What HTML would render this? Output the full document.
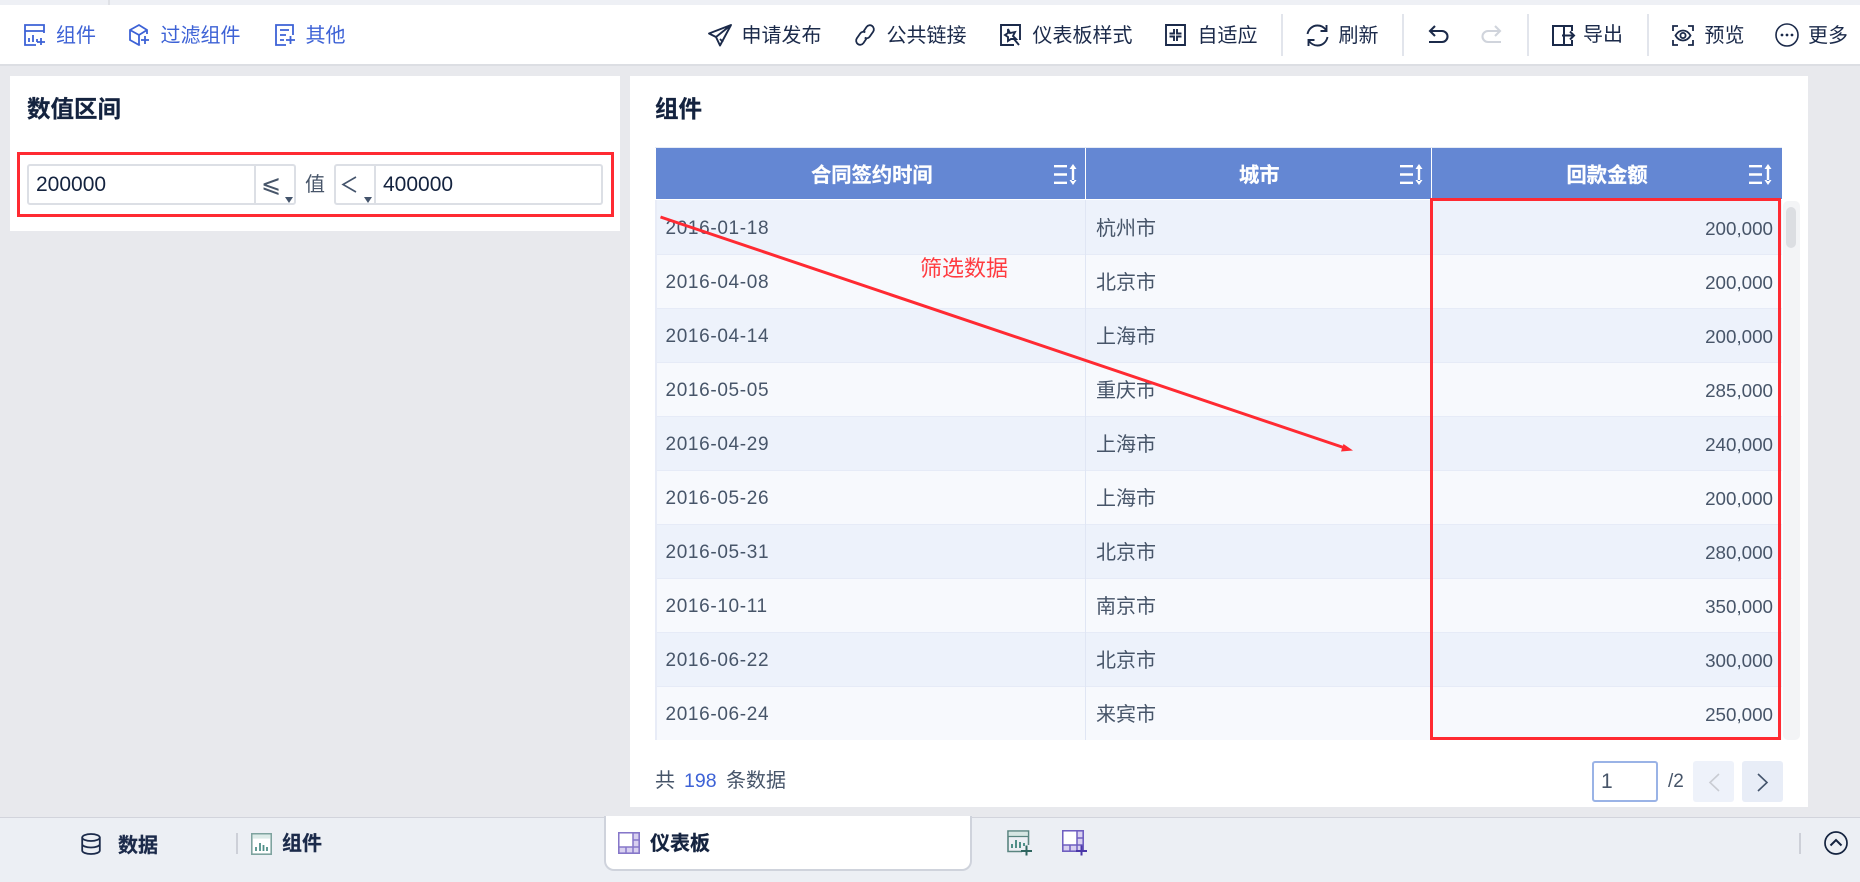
<!DOCTYPE html>
<html lang="zh"><head><meta charset="utf-8"><title>仪表板</title>
<style>
html,body{margin:0;padding:0}
body{width:1860px;height:882px;position:relative;overflow:hidden;background:#e8e9ed;font-family:"Liberation Sans","Noto Sans CJK SC",sans-serif;color:#1b2a4a}
.a{position:absolute;box-sizing:border-box}
.t{position:absolute;white-space:nowrap;line-height:24px;height:24px;font-size:20px;margin-top:1px}
.b{font-weight:700;-webkit-text-stroke:.25px currentColor}
.bl{color:#3d62d6}
.g{color:#475569}
svg{position:absolute;overflow:visible}
.v{position:absolute;width:2px;background:#e2e5ec}
.r{position:absolute;left:655px;width:1127px;border-bottom:1px solid #e6ebf7;box-sizing:border-box}
.c1,.c2,.c3{position:absolute;line-height:24px;white-space:nowrap;color:#475569;margin-top:1px}
.c1{left:10.5px;font-size:19px;letter-spacing:.65px}
.c2{left:441px;font-size:20px}
.c3{right:9px;font-size:18.8px}
.th{position:absolute;top:148px;height:51px;background:#6487d3}
.tt{position:absolute;top:164px;line-height:24px;font-size:20.300px;font-weight:700;color:#fff;white-space:nowrap;-webkit-text-stroke:.25px #fff}
</style></head><body>

<!-- top strip -->
<div class="a" style="left:0;top:0;width:1860px;height:5px;background:#eef0f5"></div>
<div class="a" style="left:108px;top:0;width:2px;height:5px;background:#dfe1e6"></div>
<!-- toolbar -->
<div class="a" style="left:0;top:5px;width:1860px;height:59px;background:#fff"></div>
<div class="a" style="left:0;top:64px;width:1860px;height:2px;background:#dcdee3"></div>

<svg style="left:24px;top:24px" width="22" height="22" viewBox="0 0 22 22" fill="none" stroke="#3d62d6" stroke-width="1.8"><path d="M20 9V1H1v20h11M1 7h19M5 18v-4M9 18v-7M13 18v-3M13 18h8M17 14v7"/></svg>
<span class="t bl" style="left:56px;top:23px">组件</span>
<svg style="left:129px;top:24px" width="21" height="22" viewBox="0 0 21 22" fill="none" stroke="#3d62d6" stroke-width="1.8"><path d="M18 10V6L10 1 1 6v10l9 5 1-.5M1 6l9 5 8-5M10 11v10M12 16h8M16 12v8"/></svg>
<span class="t bl" style="left:160.500px;top:23px">过滤组件</span>
<svg style="left:275px;top:24px" width="21" height="22" viewBox="0 0 21 22" fill="none" stroke="#3d62d6" stroke-width="1.8"><path d="M18 11V1H1v20h10M5 6h9M5 11h6M5 16h4M11 16h9M15.500 12v8"/></svg>
<span class="t bl" style="left:305.500px;top:23px">其他</span>

<svg style="left:708px;top:24px" width="24" height="23" viewBox="0 0 24 23" fill="none" stroke="#1b2a4a" stroke-width="1.9" stroke-linejoin="round"><path d="M23 1 1 9.500l7 3.500 4 8.500L23 1zM8 13 23 1M12 15l3 3"/></svg>
<span class="t" style="left:741.500px;top:23px">申请发布</span>
<svg style="left:854px;top:24px" width="22" height="22" viewBox="0 0 22 22" fill="none" stroke="#1b2a4a" stroke-width="1.8"><path d="M9.500 7.500l3-4.500c1.500-2 4-2.300 5.700-1s2.200 3.800 1 5.600l-3.500 5c-1.200 1.700-3.300 2-5 1M12.500 14.500l-3 4.500c-1.500 2-4 2.300-5.700 1s-2.200-3.800-1-5.600l3.500-5c1.200-1.700 3.300-2 5-1"/></svg>
<span class="t" style="left:886.500px;top:23px">公共链接</span>
<svg style="left:1000px;top:24px" width="21" height="22" viewBox="0 0 21 22" fill="none" stroke="#1b2a4a" stroke-width="1.9"><path d="M14 21H1V1h19v15M8 5l2 4 5-1-2 4 3 3-5 0-3 2 0-4-3-2 3-2zM14 15l5 6"/></svg>
<span class="t" style="left:1032.500px;top:23px">仪表板样式</span>
<svg style="left:1165px;top:24px" width="21" height="22" viewBox="0 0 21 22" fill="none" stroke="#1b2a4a" stroke-width="1.9"><path d="M1 1h19v20H1zM4.500 9.500h4.500V5M16.500 9.500H12V5M4.500 12.500h4.500V17M16.500 12.500H12V17"/></svg>
<span class="t" style="left:1197.500px;top:23px">自适应</span>

<div class="v" style="left:1281px;top:14px;height:42px"></div>
<svg style="left:1306px;top:24px" width="23" height="23" viewBox="0 0 23 23" fill="none" stroke="#1b2a4a" stroke-width="1.9"><path d="M1.500 10C2.500 5 6.500 1.500 11.500 1.500c3.500 0 6.300 1.500 8.500 4.500M21.500 13c-1 5-5 8.500-10 8.500-3.500 0-6.300-1.500-8.500-4.500M20.500 1v6h-6M2.500 22v-6h6"/></svg>
<span class="t" style="left:1338.500px;top:23px">刷新</span>
<div class="v" style="left:1402px;top:14px;height:42px"></div>
<svg style="left:1428px;top:24px" width="21" height="21" viewBox="0 0 21 21" fill="none" stroke="#1b2a4a" stroke-width="2.100"><path d="M7 2 2 7l5 5M2 7h12a5.500 5.500 0 0 1 0 11H1"/></svg>
<svg style="left:1481px;top:24px" width="21" height="21" viewBox="0 0 21 21" fill="none" stroke="#d0d4dc" stroke-width="2.100"><path d="M14 2l5 5-5 5M19 7H7a5.500 5.500 0 0 0 0 11h13"/></svg>
<div class="v" style="left:1527px;top:14px;height:42px"></div>
<svg style="left:1552px;top:25px" width="23" height="21" viewBox="0 0 23 21" fill="none" stroke="#1b2a4a" stroke-width="2"><path d="M1 1h11v19H1zM12 1h8v5M12 20h8v-5M10 10.500h12M18 6.500l4 4-4 4"/></svg>
<span class="t" style="left:1583px;top:22px">导出</span>
<div class="v" style="left:1647px;top:14px;height:42px"></div>
<svg style="left:1672px;top:25px" width="22" height="21" viewBox="0 0 22 21" fill="none" stroke="#1b2a4a" stroke-width="1.8"><path d="M1 6V1h5M16 1h5v5M1 15v5h5M16 20h5v-5M3.500 10.500C5.500 7 8 5.500 11 5.500s5.500 1.500 7.500 5c-2 3.500-4.500 5-7.500 5s-5.500-1.500-7.500-5z"/><circle cx="11" cy="10.500" r="2.600"/></svg>
<span class="t" style="left:1704.500px;top:23px">预览</span>
<svg style="left:1775px;top:23px" width="24" height="24" viewBox="0 0 24 24" fill="none" stroke="#1b2a4a" stroke-width="1.6"><circle cx="12" cy="12" r="11"/><circle cx="7" cy="12" r=".6" fill="#1b2a4a"/><circle cx="12" cy="12" r=".6" fill="#1b2a4a"/><circle cx="17" cy="12" r=".6" fill="#1b2a4a"/></svg>
<span class="t" style="left:1808px;top:23px">更多</span>

<!-- left panel -->
<div class="a" style="left:10px;top:76px;width:610px;height:155px;background:#fff"></div>
<span class="t b" style="left:27px;top:96px;font-size:23.500px;line-height:24px;color:#14233f">数值区间</span>
<div class="a" style="left:27px;top:164px;width:269px;height:41px;border:2px solid #dcdfe5;border-radius:3px;background:#fff"></div>
<div class="a" style="left:254px;top:165px;width:2px;height:39px;background:#dcdfe5"></div>
<span class="t" style="left:36px;top:172px;font-size:21px;color:#14233f">200000</span>
<span class="t g" style="left:261px;top:171px;font-size:24px;font-family:'DejaVu Sans',sans-serif">⩽</span>
<div class="a" style="left:285px;top:197px;width:0;height:0;border-left:4px solid transparent;border-right:4px solid transparent;border-top:6px solid #44546c"></div>
<span class="t g" style="left:305px;top:172px">值</span>
<div class="a" style="left:334px;top:164px;width:269px;height:41px;border:2px solid #dcdfe5;border-radius:3px;background:#fff"></div>
<div class="a" style="left:374px;top:165px;width:2px;height:39px;background:#dcdfe5"></div>
<svg style="left:342px;top:176px" width="15" height="17" viewBox="0 0 15 17" fill="none" stroke="#44546c" stroke-width="1.6"><path d="M14 1 1 8.500 14 16"/></svg>
<div class="a" style="left:364px;top:197px;width:0;height:0;border-left:4px solid transparent;border-right:4px solid transparent;border-top:6px solid #44546c"></div>
<span class="t" style="left:383px;top:172px;font-size:21px;color:#14233f">400000</span>
<div class="a" style="left:17px;top:152px;width:597px;height:65px;border:3px solid #ff2a32"></div>

<!-- right panel -->
<div class="a" style="left:630px;top:76px;width:1178px;height:731px;background:#fff"></div>
<span class="t b" style="left:655px;top:96px;font-size:23.500px;color:#14233f">组件</span>

<div class="th" style="left:656px;width:429px"></div>
<div class="th" style="left:1086px;width:345px"></div>
<div class="th" style="left:1432px;width:350px"></div>
<div class="a" style="left:655px;top:147px;width:1127px;height:1px;background:#e6ebf5"></div>
<span class="tt" style="left:811px">合同签约时间</span>
<span class="tt" style="left:1239px">城市</span>
<span class="tt" style="left:1566.500px">回款金额</span>
<svg style="left:1054px;top:164px" width="24" height="21" viewBox="0 0 24 21" fill="#fff"><path d="M0 1h13v2.400H0zM0 9.300h13v2.400H0zM0 17.600h13v2.400H0zM17.800 4h2.400v13h-2.400zM15.500 5l3.500-5 3.500 5zM15.500 16l3.500 5 3.500-5z"/></svg>
<svg style="left:1400px;top:164px" width="24" height="21" viewBox="0 0 24 21" fill="#fff"><path d="M0 1h13v2.400H0zM0 9.300h13v2.400H0zM0 17.600h13v2.400H0zM17.800 4h2.400v13h-2.400zM15.500 5l3.500-5 3.500 5zM15.500 16l3.500 5 3.500-5z"/></svg>
<svg style="left:1749px;top:164px" width="24" height="21" viewBox="0 0 24 21" fill="#fff"><path d="M0 1h13v2.400H0zM0 9.300h13v2.400H0zM0 17.600h13v2.400H0zM17.800 4h2.400v13h-2.400zM15.500 5l3.500-5 3.500 5zM15.500 16l3.500 5 3.500-5z"/></svg>

<div class="r" style="top:200px;height:55px;background:#edf2fb"><span class="c1" style="top:16px">2016-01-18</span><span class="c2" style="top:16px">杭州市</span><span class="c3" style="top:16px">200,000</span></div>
<div class="r" style="top:255px;height:54px;background:#f7f9fd"><span class="c1" style="top:15px">2016-04-08</span><span class="c2" style="top:15px">北京市</span><span class="c3" style="top:15px">200,000</span></div>
<div class="r" style="top:309px;height:54px;background:#edf2fb"><span class="c1" style="top:15px">2016-04-14</span><span class="c2" style="top:15px">上海市</span><span class="c3" style="top:15px">200,000</span></div>
<div class="r" style="top:363px;height:54px;background:#f7f9fd"><span class="c1" style="top:15px">2016-05-05</span><span class="c2" style="top:15px">重庆市</span><span class="c3" style="top:15px">285,000</span></div>
<div class="r" style="top:417px;height:54px;background:#edf2fb"><span class="c1" style="top:15px">2016-04-29</span><span class="c2" style="top:15px">上海市</span><span class="c3" style="top:15px">240,000</span></div>
<div class="r" style="top:471px;height:54px;background:#f7f9fd"><span class="c1" style="top:15px">2016-05-26</span><span class="c2" style="top:15px">上海市</span><span class="c3" style="top:15px">200,000</span></div>
<div class="r" style="top:525px;height:54px;background:#edf2fb"><span class="c1" style="top:15px">2016-05-31</span><span class="c2" style="top:15px">北京市</span><span class="c3" style="top:15px">280,000</span></div>
<div class="r" style="top:579px;height:54px;background:#f7f9fd"><span class="c1" style="top:15px">2016-10-11</span><span class="c2" style="top:15px">南京市</span><span class="c3" style="top:15px">350,000</span></div>
<div class="r" style="top:633px;height:54px;background:#edf2fb"><span class="c1" style="top:15px">2016-06-22</span><span class="c2" style="top:15px">北京市</span><span class="c3" style="top:15px">300,000</span></div>
<div class="r" style="top:687px;height:53px;background:#f7f9fd;border-bottom:0"><span class="c1" style="top:15px">2016-06-24</span><span class="c2" style="top:15px">来宾市</span><span class="c3" style="top:15px">250,000</span></div>
<div class="a" style="left:655px;top:200px;width:2px;height:540px;background:#e8ecf7"></div>
<div class="a" style="left:1085px;top:200px;width:1px;height:540px;background:#e0e6f4"></div>
<div class="a" style="left:1431px;top:200px;width:1px;height:540px;background:#e0e6f4"></div>

<!-- scrollbar -->
<div class="a" style="left:1783px;top:201px;width:17px;height:539px;background:#f3f4f6;border-radius:5px"></div>
<div class="a" style="left:1786px;top:207px;width:10px;height:41px;background:#dcdee2;border-radius:5px"></div>

<!-- red highlight -->
<div class="a" style="left:1430px;top:198px;width:351px;height:542px;border:3px solid #ff2a32"></div>
<svg style="left:0;top:0" width="1860" height="882"><path d="M660.500 217 1345 448" stroke="#ff2a32" stroke-width="3" fill="none"/><path d="M1353 450.500 1341 451.500 1343.500 444z" fill="#ff2a32"/></svg>
<span class="t" style="left:920px;top:256px;font-size:22px;color:#ff3b40">筛选数据</span>

<!-- footer -->
<span class="t g" style="left:655px;top:768px">共</span>
<span class="t" style="left:684px;top:768px;color:#3d62d6;font-size:19.500px">198</span>
<span class="t g" style="left:726px;top:768px">条数据</span>
<div class="a" style="left:1592px;top:761px;width:66px;height:41px;border:2px solid #9ab3e6;border-radius:3px;background:#fff"></div>
<span class="t g" style="left:1601px;top:769px;font-size:21px">1</span>
<span class="t g" style="left:1668px;top:769px;font-size:19px">/2</span>
<div class="a" style="left:1693px;top:761px;width:41px;height:41px;background:#eef2fa;border-radius:3px"></div>
<svg style="left:1708px;top:773px" width="12" height="19" viewBox="0 0 12 19" fill="none" stroke="#c9ccd3" stroke-width="1.600"><path d="M11 1 2 9.500 11 18"/></svg>
<div class="a" style="left:1742px;top:761px;width:41px;height:41px;background:#e8edf7;border-radius:3px"></div>
<svg style="left:1757px;top:773px" width="12" height="19" viewBox="0 0 12 19" fill="none" stroke="#44546c" stroke-width="1.600"><path d="M1 1l9 8.500L1 18"/></svg>

<!-- bottom bar -->
<div class="a" style="left:0;top:817px;width:1860px;height:65px;background:#eceff4;border-top:1px solid #d2d4dc"></div>
<svg style="left:81px;top:833px" width="20" height="22" viewBox="0 0 20 22" fill="none" stroke="#1b2a4a" stroke-width="1.800"><ellipse cx="10" cy="4.500" rx="8.800" ry="3.500"/><path d="M1.200 4.500v13c0 2 4 3.500 8.800 3.500s8.800-1.500 8.800-3.500v-13M1.200 11c0 2 4 3.500 8.800 3.500s8.800-1.500 8.800-3.500"/></svg>
<span class="t b" style="left:118px;top:833px">数据</span>
<div class="a" style="left:236px;top:833px;width:2px;height:21px;background:#cdd0d8"></div>
<svg style="left:251px;top:833px" width="21" height="22" viewBox="0 0 21 22" fill="none"><rect x=".8" y=".8" width="19.400" height="20.400" fill="#fff" stroke="#7ea39f" stroke-width="1.600"/><rect x="1.600" y="1.600" width="17.800" height="4" fill="#dcebe8"/><path d="M5 18v-4M9 18v-8M12.500 18v-6M16 18v-4" stroke="#4f8f88" stroke-width="1.800"/></svg>
<span class="t b" style="left:282px;top:831px">组件</span>

<div class="a" style="left:604px;top:816px;width:368px;height:55px;background:#fff;border:2px solid #cfd3dc;border-top:0;border-radius:0 0 10px 10px"></div>
<svg style="left:618px;top:832px" width="22" height="22" viewBox="0 0 22 22" fill="none"><rect x=".8" y=".8" width="20.400" height="20.400" fill="#d8d0f0" stroke="#8677c9" stroke-width="1.600"/><rect x="1.600" y="1.600" width="13.400" height="13" fill="#fff"/><path d="M15 1v14M15 8h6M1 15h20M8 15v6M15 15v6" stroke="#8677c9" stroke-width="1.500"/></svg>
<span class="t b" style="left:650px;top:831px;color:#14233f">仪表板</span>

<svg style="left:1007px;top:830px" width="26" height="26" viewBox="0 0 26 26" fill="none"><path d="M15 21.500H1V1h20.500v14" stroke="#5a8580" stroke-width="1.600"/><rect x="1.800" y="1.800" width="19" height="4.500" fill="#d6e6e3"/><path d="M1 6.500h20.500" stroke="#5a8580" stroke-width="1.200"/><path d="M5 18v-4M9 18v-8M13 18v-6M17 16v-3" stroke="#4f8f88" stroke-width="2"/><path d="M14 21h11M19.500 15.500v10" stroke="#2f6660" stroke-width="2"/></svg>
<svg style="left:1062px;top:830px" width="26" height="26" viewBox="0 0 26 26" fill="none"><rect x=".8" y=".8" width="20.400" height="20.400" fill="#d8d0f0" stroke="#6f5fc0" stroke-width="1.600"/><rect x="1.600" y="1.600" width="13.400" height="13" fill="#fff"/><path d="M15 1v14M15 8h6M1 15h20M8 15v6M15 15v6" stroke="#6f5fc0" stroke-width="1.500"/><path d="M14 21h11M19.500 15.500v10" stroke="#4a37a8" stroke-width="2" fill="none"/></svg>

<div class="a" style="left:1799px;top:833px;width:2px;height:21px;background:#cdd0d8"></div>
<svg style="left:1824px;top:831px" width="24" height="24" viewBox="0 0 24 24" fill="none" stroke="#14233f" stroke-width="1.700"><circle cx="12" cy="12" r="11"/><path d="M6.500 14.500 12 9l5.500 5.500" stroke-width="2"/></svg>
</body></html>
